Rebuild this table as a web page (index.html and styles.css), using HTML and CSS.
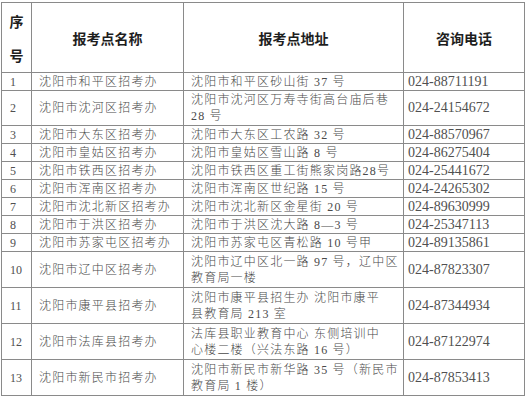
FILE: index.html
```html
<!DOCTYPE html>
<html lang="zh-CN">
<head>
<meta charset="utf-8">
<title>沈阳市招考办</title>
<link rel="stylesheet" href="styles.css">
</head>
<body>
<table class="sheet">
  <colgroup>
    <col class="c-no">
    <col class="c-name">
    <col class="c-addr">
    <col class="c-tel">
  </colgroup>
  <thead>
    <tr class="head">
      <th class="h-no">序<br>号</th>
      <th>报考点名称</th>
      <th>报考点地址</th>
      <th>咨询电话</th>
    </tr>
  </thead>
  <tbody>
    <tr class="one"><td class="no">1</td><td class="name">沈阳市和平区招考办</td><td class="addr">沈阳市和平区砂山街 37 号</td><td class="tel">024-88711191</td></tr>
    <tr class="two"><td class="no">2</td><td class="name">沈阳市沈河区招考办</td><td class="addr">沈阳市沈河区万寿寺街高台庙后巷<br>28 号</td><td class="tel">024-24154672</td></tr>
    <tr class="one"><td class="no">3</td><td class="name">沈阳市大东区招考办</td><td class="addr">沈阳市大东区工农路 32 号</td><td class="tel">024-88570967</td></tr>
    <tr class="one"><td class="no">4</td><td class="name">沈阳市皇姑区招考办</td><td class="addr">沈阳市皇姑区雪山路 8 号</td><td class="tel">024-86275404</td></tr>
    <tr class="one"><td class="no">5</td><td class="name">沈阳市铁西区招考办</td><td class="addr">沈阳市铁西区重工街熊家岗路28号</td><td class="tel">024-25441672</td></tr>
    <tr class="one"><td class="no">6</td><td class="name">沈阳市浑南区招考办</td><td class="addr">沈阳市浑南区世纪路 15 号</td><td class="tel">024-24265302</td></tr>
    <tr class="one"><td class="no">7</td><td class="name">沈阳市沈北新区招考办</td><td class="addr">沈阳市沈北新区金星街 20 号</td><td class="tel">024-89630999</td></tr>
    <tr class="one"><td class="no">8</td><td class="name">沈阳市于洪区招考办</td><td class="addr">沈阳市于洪区沈大路 8—3 号</td><td class="tel">024-25347113</td></tr>
    <tr class="one"><td class="no">9</td><td class="name">沈阳市苏家屯区招考办</td><td class="addr">沈阳市苏家屯区青松路 10 号甲</td><td class="tel">024-89135861</td></tr>
    <tr class="two tall"><td class="no">10</td><td class="name">沈阳市辽中区招考办</td><td class="addr">沈阳市辽中区北一路 97 号，辽中区<br>教育局一楼</td><td class="tel">024-87823307</td></tr>
    <tr class="two tall"><td class="no">11</td><td class="name">沈阳市康平县招考办</td><td class="addr">沈阳市康平县招生办 沈阳市康平<br>县教育局 213 室</td><td class="tel">024-87344934</td></tr>
    <tr class="two tall"><td class="no">12</td><td class="name">沈阳市法库县招考办</td><td class="addr">法库县职业教育中心 东侧培训中<br>心楼二楼（兴法东路 16 号）</td><td class="tel">024-87122974</td></tr>
    <tr class="two tall"><td class="no">13</td><td class="name">沈阳市新民市招考办</td><td class="addr">沈阳市新民市新华路 35 号（新民市<br>教育局 1 楼）</td><td class="tel">024-87853413</td></tr>
  </tbody>
</table>
</body>
</html>
```

FILE: styles.css
```css
html, body {
  margin: 0;
  padding: 0;
  background: #ffffff;
}

body {
  padding: 2px 0 0 1px;
  font-family: "Liberation Serif", "Noto Sans CJK SC", serif;
  color: #4a4a4a;
}

.sheet {
  border-collapse: collapse;
  table-layout: fixed;
  width: 523px;
  border: 1px solid #7a7a7a;
}

.c-no { width: 30px; }
.c-name { width: 152px; }
.c-addr { width: 220px; }
.c-tel { width: 121px; }

.sheet th,
.sheet td {
  border: 1px solid #8a8a8a;
  padding: 0;
  white-space: nowrap;
  overflow: hidden;
}

.head th {
  height: 69px;
  font-family: "Noto Sans CJK SC", sans-serif;
  font-size: 14px;
  font-weight: 700;
  color: #1e1e1e;
  text-align: center;
  vertical-align: middle;
  line-height: 18px;
}

.head .h-no {
  line-height: 34px;
}

.sheet td {
  font-size: 12px;
  line-height: 16px;
  vertical-align: middle;
}

.one td {
  height: 17px;
}

.two td {
  height: 34px;
}

.two.tall td {
  height: 35px;
}

.no {
  font-size: 13px;
  padding-left: 8px !important;
  color: #505050;
}

.name {
  padding-left: 7px !important;
  letter-spacing: 1.2px;
  font-family: "Liberation Serif", "Noto Sans CJK SC", serif;
  font-weight: 300;
}

.addr {
  padding-left: 7px !important;
  letter-spacing: 1.2px;
  font-weight: 300;
  line-height: 16px;
}

.tel {
  padding-left: 4px !important;
  font-size: 14px !important;
  letter-spacing: 0;
  color: #505050;
}
```
